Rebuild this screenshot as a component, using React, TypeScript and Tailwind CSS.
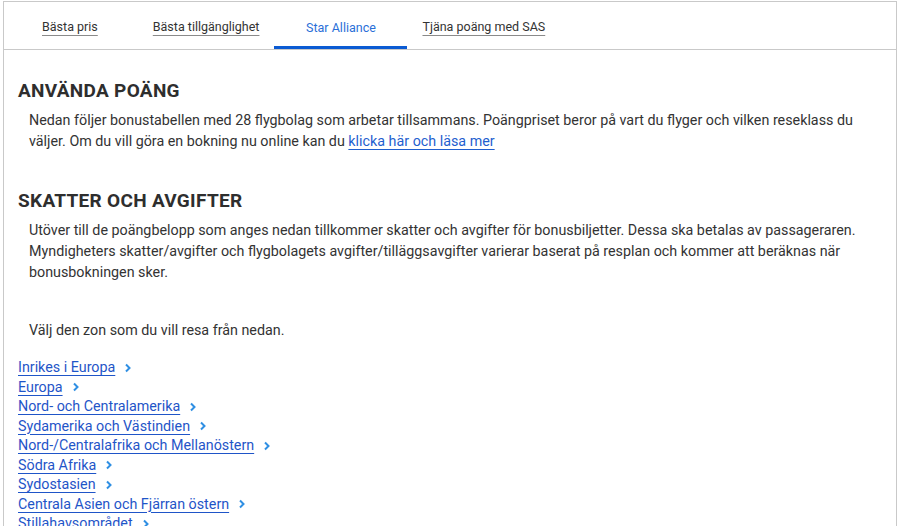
import React from "react";

const zones = [
  "Inrikes i Europa",
  "Europa",
  "Nord- och Centralamerika",
  "Sydamerika och Västindien",
  "Nord-/Centralafrika och Mellanöstern",
  "Södra Afrika",
  "Sydostasien",
  "Centrala Asien och Fjärran östern",
  "Stillahavsområdet",
];

function Chevron() {
  return (
    <svg width="8" height="10" viewBox="0 0 8 10" className="ml-[9px] inline-block" aria-hidden>
      <path d="M2 1.5 L5.5 5 L2 8.5" fill="none" stroke="#2f8fe3" strokeWidth="2" />
    </svg>
  );
}

export default function App() {
  return (
    <div
      className="h-[526px] overflow-hidden bg-white text-[#333]"
      style={{ fontFamily: "Roboto, 'Liberation Sans', sans-serif" }}
    >
      <div className="mx-[3px] mt-[1px] h-[560px] border border-[#c9c9c9]">
        {/* tab bar */}
        <div className="flex h-[48px] items-stretch border-b border-[#c9c9c9] pt-[4px] text-[12.5px]">
          <div className="ml-[38px] flex items-center">
            <span className="underline decoration-[#8a8a8a] underline-offset-[4px]">Bästa pris</span>
          </div>
          <div className="ml-[55px] flex items-center">
            <span className="underline decoration-[#8a8a8a] underline-offset-[4px]">Bästa tillgänglighet</span>
          </div>
          <div className="ml-[15px] flex w-[133px] items-center justify-center border-b-[3px] border-[#0b5bd3] pt-[4px] text-[#2a6fd8]">
            Star Alliance
          </div>
          <div className="ml-[15px] flex items-center">
            <span className="underline decoration-[#8a8a8a] underline-offset-[4px]">Tjäna poäng med SAS</span>
          </div>
        </div>

        <div className="px-[14px]">
          <h2 className="mt-[30px] text-[19px] font-bold leading-[22px] tracking-[0.3px] text-[#2e2e2e]">ANVÄNDA POÄNG</h2>
          <p className="mt-[8px] pl-[11px] text-[14.3px] leading-[21px]">
            Nedan följer bonustabellen med 28 flygbolag som arbetar tillsammans. Poängpriset beror på vart du flyger och vilken reseklass du
            väljer. Om du vill göra en bokning nu online kan du{" "}
            <a className="text-[#1f5fcf] underline underline-offset-[3px]">klicka här och läsa mer</a>
          </p>

          <h2 className="mt-[38px] text-[19px] font-bold leading-[22px] tracking-[0.3px] text-[#2e2e2e]">SKATTER OCH AVGIFTER</h2>
          <p className="mt-[8px] pl-[11px] text-[14.3px] leading-[21px]">
            Utöver till de poängbelopp som anges nedan tillkommer skatter och avgifter för bonusbiljetter. Dessa ska betalas av passageraren.
            <br />
            Myndigheters skatter/avgifter och flygbolagets avgifter/tilläggsavgifter varierar baserat på resplan och kommer att beräknas när
            bonusbokningen sker.
          </p>

          <p className="mt-[37px] pl-[11px] text-[14.3px] leading-[21px]">Välj den zon som du vill resa från nedan.</p>

          <ul className="mt-[17px] text-[14.3px] leading-[19.5px]">
            {zones.map((z) => (
              <li key={z} className="flex items-center">
                <a className="text-[#1f55c8] underline decoration-[#1f55c8] underline-offset-[3px]">{z}</a>
                <Chevron />
              </li>
            ))}
          </ul>
        </div>
      </div>
    </div>
  );
}
